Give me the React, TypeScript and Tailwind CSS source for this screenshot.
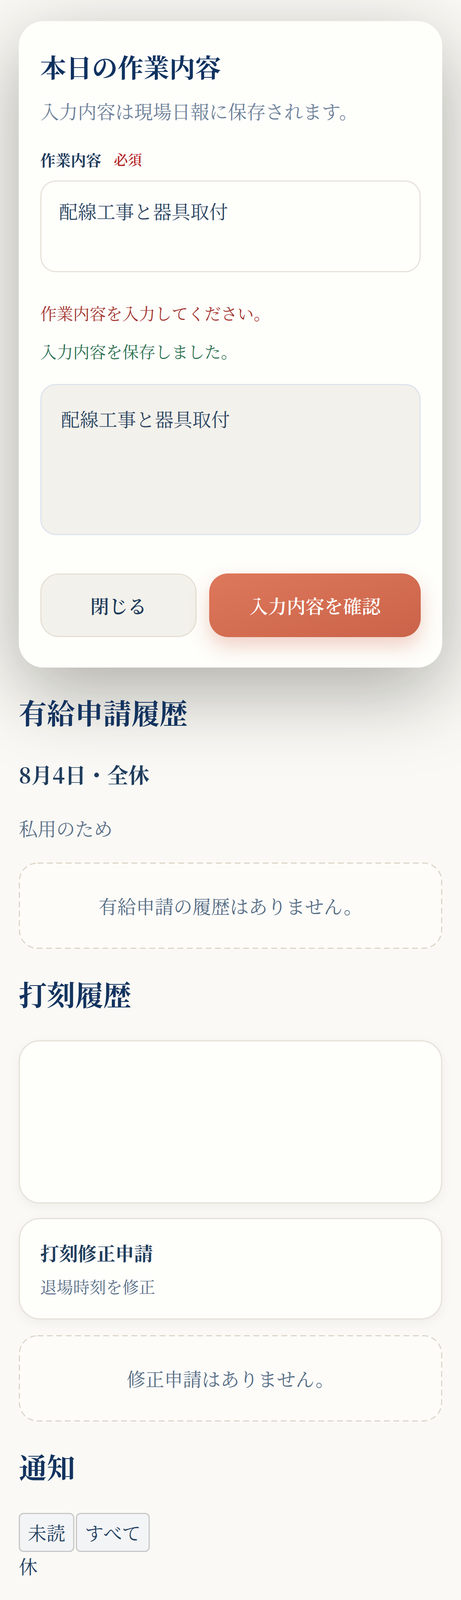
function DashedBox({ text, className }: { text: string; className: string }) {
  return (
    <div className={`relative flex h-[221px] items-center justify-center text-[48px] leading-[72px] text-[#566d85] ${className}`}>
      <svg className="pointer-events-none absolute inset-0" width="1083" height="221" viewBox="0 0 1083 221" aria-hidden="true">
        <rect x="1.5" y="1.5" width="1080" height="218" rx="46.5" ry="46.5" fill="#fdfcf9" stroke="#ddd6c9" strokeWidth="3" strokeDasharray="15 9" />
      </svg>
      <span className="relative">{text}</span>
    </div>
  );
}

export default function App() {
  return (
    <div className="min-h-[5052px] bg-[#faf9f5] px-[48px] pt-[54px] pb-[153px] text-[#1f3d5c] [font-family:'Noto_Serif_CJK_JP','Noto_Serif_JP','Liberation_Serif','Noto_Sans_CJK_JP',serif]">
      {/* 作業内容カード */}
      <section className="rounded-[64px] bg-[#fefefb] px-[55px] pt-[74px] pb-[78px] shadow-[0_60px_200px_rgba(30,30,20,0.35)]">
        <h1 className="text-[66px] leading-[84px] font-bold text-[#0f3260]">本日の作業内容</h1>
        <p className="mt-[36px] text-[48px] leading-[72px] text-[#6d8199]">入力内容は現場日報に保存されます。</p>
        <label className="mt-[59px] flex items-center text-[39px] leading-[58px] font-bold text-[#1f3d5c]">
          <span>作業内容</span>
          <span className="ml-[32px] text-[36px] font-semibold text-[#b52a2a]">必須</span>
        </label>
        <textarea
          defaultValue="配線工事と器具取付"
          className="mt-[25px] block h-[235px] w-full resize-none overflow-hidden rounded-[40px] border-[3px] border-[#e6e2d9] bg-[#fefefb] px-[45px] pt-[39px] text-[48px] leading-[72px] text-[#2b4562] outline-none"
        />
        <p className="mt-[73px] text-[42px] leading-[63px] text-[#a3352e]">作業内容を入力してください。</p>
        <p className="mt-[35px] text-[42px] leading-[63px] text-[#2c7150]">入力内容を保存しました。</p>
        <textarea
          readOnly
          defaultValue="配線工事と器具取付"
          className="mt-[52px] block h-[387px] w-full resize-none overflow-hidden rounded-[40px] border-[3px] border-[#dde4ee] bg-[#f3f1eb] px-[50px] pt-[50px] text-[48px] leading-[72px] text-[#2b4562] outline-none"
        />
        <div className="mt-[98px] flex gap-[32px]">
          <button className="h-[163px] w-[400px] rounded-[48px] border-[3px] border-[#e6e1d6] bg-[#f3f1eb] text-[48px] font-semibold text-[#1f3d5c]">
            閉じる
          </button>
          <button className="h-[163px] flex-1 rounded-[48px] bg-gradient-to-br from-[#de785b] to-[#ca6349] text-[48px] font-semibold text-white shadow-[0_24px_50px_rgba(210,105,80,0.3)]">
            入力内容を確認
          </button>
        </div>
      </section>

      {/* 有給申請履歴 */}
      <h2 className="mt-[65px] text-[72px] leading-[96px] font-bold text-[#13335f]">有給申請履歴</h2>
      <h3 className="mt-[74px] text-[54px] leading-[76px] font-bold text-[#1f3d5c]">8月4日・全休</h3>
      <p className="mt-[64px] text-[48px] leading-[72px] text-[#5b7189]">私用のため</p>
      <DashedBox className="mt-[52px]" text="有給申請の履歴はありません。" />

      {/* 打刻履歴 */}
      <h2 className="mt-[66px] text-[72px] leading-[96px] font-bold text-[#13335f]">打刻履歴</h2>
      <div className="mt-[72px] h-[418px] rounded-[54px] border-[3px] border-[#e6e2d9] bg-[#fefefb] shadow-[0_8px_30px_rgba(0,0,0,0.05)]" />
      <div className="mt-[37px] h-[260px] rounded-[54px] border-[3px] border-[#e6e2d9] bg-[#fefefb] px-[52px] pt-[52px] shadow-[0_8px_30px_rgba(0,0,0,0.05)]">
        <p className="text-[48px] leading-[68px] font-bold text-[#1f3d5c]">打刻修正申請</p>
        <p className="mt-[22px] text-[42px] leading-[60px] text-[#5b7189]">退場時刻を修正</p>
      </div>
      <DashedBox className="mt-[40px]" text="修正申請はありません。" />

      {/* 通知 */}
      <h2 className="mt-[66px] text-[72px] leading-[96px] font-bold text-[#13335f]">通知</h2>
      <div className="mt-[72px] flex gap-[4px]">
        <button className="rounded-[12px] border-[3px] border-[#c8c8c8] bg-[#f3f4f6] px-[20px] py-[11px] text-[48px] leading-[72px] text-[#22405f]">
          未読
        </button>
        <button className="rounded-[12px] border-[3px] border-[#c8c8c8] bg-[#f3f4f6] px-[20px] py-[11px] text-[48px] leading-[72px] text-[#22405f]">
          すべて
        </button>
      </div>
      <p className="text-[48px] leading-[72px] text-[#22405f]">休</p>
      <h3 className="mt-[62px] text-[54px] leading-[76px] font-bold text-[#22405f]">有給申請結果</h3>
      <p className="mt-[60px] text-[48px] leading-[72px] text-[#5b7189]">12:00</p>
      <p className="mt-[55px] text-[48px] leading-[72px] text-[#4f6a82]">有給申請が承認されました。</p>
      <p className="mt-[50px] text-[48px] leading-[72px] text-[#4f6a82]">受信内容</p>
      <p className="text-[48px] leading-[72px] font-bold text-[#1f3d5c]">›</p>
      <DashedBox className="mt-[42px]" text="該当する通知はありません。" />
    </div>
  );
}
